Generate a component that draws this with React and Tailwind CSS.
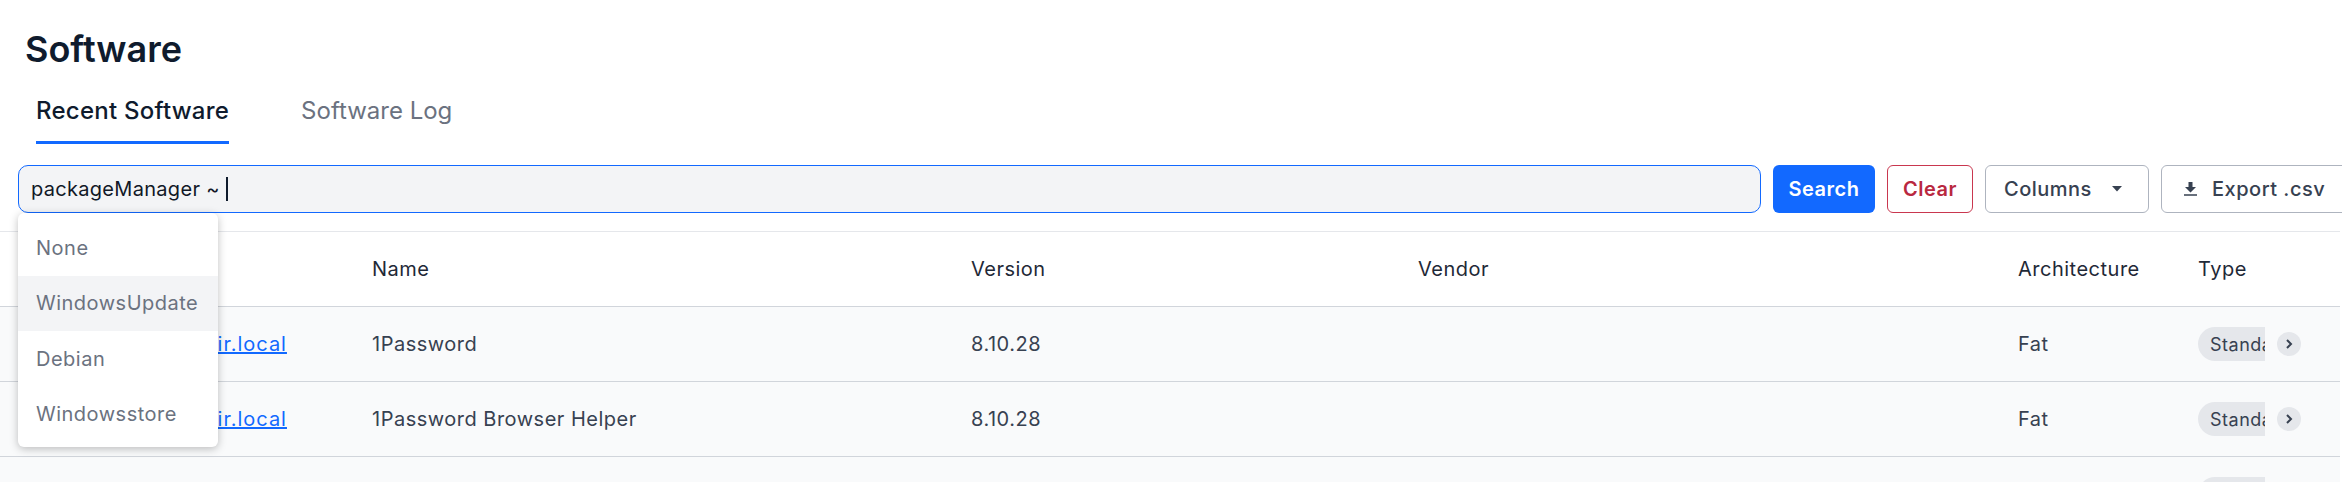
import React from 'react';

const rows = [
    { name: '1Password' },
    { name: '1Password Browser Helper' },
    { name: '1Password Helper' },
];

const options = ['None', 'WindowsUpdate', 'Debian', 'Windowsstore'];

const gridCols = 'grid grid-cols-[372px_599px_447px_600px_180px_142px]';

const TableRow = ({ name }) => (
    <div className={`${gridCols} h-[75px] items-center border-b border-[#d1d5db] bg-[#f9fafb] text-[#374151]`}>
        <div className="pl-[37px] whitespace-nowrap">
            <a href="#" className="tracking-[0.05em] text-[#1269ff] underline">John-MacBook-Air.local</a>
        </div>
        <div>{name}</div>
        <div>8.10.28</div>
        <div></div>
        <div>Fat</div>
        <div className="flex items-center">
            <div className="w-[67px] overflow-hidden">
                <span className="flex h-[34px] w-[110px] items-center rounded-full bg-[#e5e7eb] pl-[12px] text-[18px]">Standard</span>
            </div>
            <button className="ml-[12px] flex size-[24px] items-center justify-center rounded-full bg-[#e5e7eb]">
                <svg width="12" height="12" viewBox="0 0 12 12" fill="none" stroke="#374151" strokeWidth="2">
                    <path d="M4 2l4 4-4 4" />
                </svg>
            </button>
        </div>
    </div>
);

const App = () => (
    <div className="relative h-[482px] w-[2342px] overflow-hidden bg-white font-['Inter',sans-serif] text-[20px] tracking-wide text-[#111827]">
        <h1 className="pl-[25px] pt-[25px] text-[36px] leading-[48px] font-semibold tracking-normal text-[#0f1b2d]">Software</h1>

        <div className="mt-[20px] flex gap-[72px] pl-[36px] text-[24px] tracking-[0.01em]">
            <div className="h-[51px] border-b-[3px] border-[#1269ff] leading-[36px] font-medium text-[#0f1b2d]">Recent Software</div>
            <div className="leading-[36px] tracking-normal text-[#6b7280]">Software Log</div>
        </div>

        <div className="mt-[21px] flex gap-[12px] pl-[18px]">
            <div className="flex h-[48px] w-[1743px] shrink-0 items-center rounded-[10px] border border-[#1269ff] bg-[#f3f4f6] pl-[12px] tracking-[0.015em] text-[#111827]">
                packageManager ~
                <span className="ml-[6px] h-[24px] w-[2px] bg-[#0f1b2d]"></span>
            </div>
            <button className="h-[48px] w-[102px] shrink-0 rounded-[6px] bg-[#1269ff] font-semibold text-white">Search</button>
            <button className="h-[48px] w-[86px] shrink-0 rounded-[6px] border border-[#c9374f] font-semibold text-[#b9283f]">Clear</button>
            <button className="flex h-[48px] w-[164px] shrink-0 items-center rounded-[6px] border border-[#aeb4bf] pl-[18px] font-medium text-[#374151]">
                Columns
                <svg className="ml-[20px]" width="10" height="6" viewBox="0 0 10 6" fill="#374151"><path d="M0 0h10L5 5.5z" /></svg>
            </button>
            <button className="flex h-[48px] w-[200px] shrink-0 items-center rounded-[6px] border border-[#aeb4bf] pl-[22px] font-medium text-[#374151]">
                <svg width="13" height="14" viewBox="0 0 13 14" fill="#374151"><path d="M4.5 0h4v5H12L6.5 10.5 1 5h3.5zM0 12.3h13v1.5H0z" /></svg>
                <span className="ml-[15px]">Export .csv</span>
            </button>
        </div>

        <div className="mt-[18px] w-[2340px] border-t border-[#e5e7eb]">
            <div className={`${gridCols} h-[75px] items-center border-b border-[#d1d5db] text-[#1f2937]`}>
                <div className="pl-[36px]">Hostname</div>
                <div>Name</div>
                <div>Version</div>
                <div>Vendor</div>
                <div>Architecture</div>
                <div>Type</div>
            </div>
            {rows.map(row => <TableRow key={row.name} name={row.name} />)}
        </div>

        {/* suggestion menu over the search box */}
        <div className="absolute left-[18px] top-[213px] w-[200px] rounded-[6px] bg-white pt-[7px] pb-[5px] text-[#6b7280] shadow-[0_2px_8px_rgba(0,0,0,0.25)]">
            {options.map(option => (
                <div key={option} className={`flex h-[55.5px] items-center pl-[18px] ${option === 'WindowsUpdate' ? 'bg-[#f3f4f6]' : ''}`}>{option}</div>
            ))}
        </div>
    </div>
);

export default App;
